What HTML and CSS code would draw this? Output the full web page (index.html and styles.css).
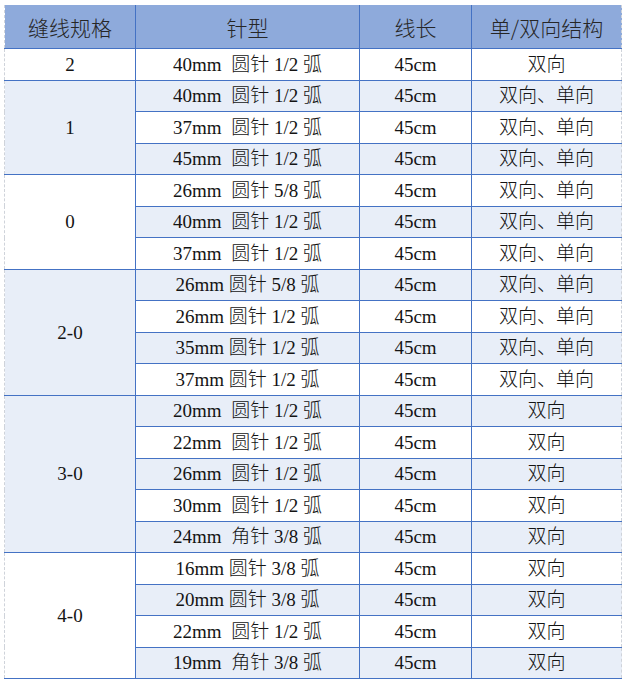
FILE: index.html
```html
<!DOCTYPE html>
<html lang="zh-CN">
<head>
<meta charset="utf-8">
<title>缝线规格</title>
<link rel="stylesheet" href="styles.css">
</head>
<body>
<table class="spec">
  <colgroup>
    <col class="c1"><col class="c2"><col class="c3"><col class="c4">
  </colgroup>
  <thead>
    <tr><th>缝线规格</th><th>针型</th><th>线长</th><th>单/双向结构</th></tr>
  </thead>
  <tbody>
    <tr class="w"><td>2</td><td class="n">40mm  圆针 1/2 弧</td><td>45cm</td><td>双向</td></tr>

    <tr class="b"><td rowspan="3" class="g">1</td><td class="n">40mm  圆针 1/2 弧</td><td>45cm</td><td>双向、单向</td></tr>
    <tr class="w"><td class="n">37mm  圆针 1/2 弧</td><td>45cm</td><td>双向、单向</td></tr>
    <tr class="b"><td class="n">45mm  圆针 1/2 弧</td><td>45cm</td><td>双向、单向</td></tr>

    <tr class="w"><td rowspan="3" class="g">0</td><td class="n">26mm  圆针 5/8 弧</td><td>45cm</td><td>双向、单向</td></tr>
    <tr class="b"><td class="n">40mm  圆针 1/2 弧</td><td>45cm</td><td>双向、单向</td></tr>
    <tr class="w"><td class="n">37mm  圆针 1/2 弧</td><td>45cm</td><td>双向、单向</td></tr>

    <tr class="b"><td rowspan="4" class="g">2-0</td><td class="n">26mm 圆针 5/8 弧</td><td>45cm</td><td>双向、单向</td></tr>
    <tr class="w"><td class="n">26mm 圆针 1/2 弧</td><td>45cm</td><td>双向、单向</td></tr>
    <tr class="b"><td class="n">35mm 圆针 1/2 弧</td><td>45cm</td><td>双向、单向</td></tr>
    <tr class="w"><td class="n">37mm 圆针 1/2 弧</td><td>45cm</td><td>双向、单向</td></tr>

    <tr class="b"><td rowspan="5" class="g">3-0</td><td class="n">20mm  圆针 1/2 弧</td><td>45cm</td><td>双向</td></tr>
    <tr class="w"><td class="n">22mm  圆针 1/2 弧</td><td>45cm</td><td>双向</td></tr>
    <tr class="b"><td class="n">26mm  圆针 1/2 弧</td><td>45cm</td><td>双向</td></tr>
    <tr class="w"><td class="n">30mm  圆针 1/2 弧</td><td>45cm</td><td>双向</td></tr>
    <tr class="b"><td class="n">24mm  角针 3/8 弧</td><td>45cm</td><td>双向</td></tr>

    <tr class="w"><td rowspan="4" class="g">4-0</td><td class="n">16mm 圆针 3/8 弧</td><td>45cm</td><td>双向</td></tr>
    <tr class="b"><td class="n">20mm 圆针 3/8 弧</td><td>45cm</td><td>双向</td></tr>
    <tr class="w"><td class="n">22mm  圆针 1/2 弧</td><td>45cm</td><td>双向</td></tr>
    <tr class="b"><td class="n">19mm  角针 3/8 弧</td><td>45cm</td><td>双向</td></tr>
  </tbody>
</table>
</body>
</html>
```
FILE: styles.css
```css
html, body {
  margin: 0;
  padding: 0;
  background: #ffffff;
}
body {
  padding: 5px 0 0 4px;
}
.spec {
  border-collapse: collapse;
  table-layout: fixed;
  width: 618px;
  font-family: "Liberation Serif", "Noto Sans CJK SC", serif;
  color: #141414;
}
.c1 { width: 131px; }
.c2 { width: 224px; }
.c3 { width: 112px; }
.c4 { width: 150px; }
.spec th {
  height: 43px;
  padding: 0;
  background: #8eaadb;
  font-weight: 300;
  font-size: 21px;
  color: #262626;
  font-family: "Noto Sans CJK SC", sans-serif;
  border-left: 1px solid #4472c4;
  border-right: 1px solid #4472c4;
  border-bottom: 1px solid #4472c4;
  border-top: none;
  text-align: center;
  vertical-align: middle;
}
.spec th:first-child { border-left: 1px dashed #cfd3da; }
.spec th:last-child { border-right: 1px dashed #cfd3da; }
.spec td {
  height: 30.5px;
  padding: 0;
  font-size: 19px;
  font-weight: 300;
  text-align: center;
  vertical-align: middle;
  border: 1px solid #4472c4;
  line-height: 1;
}
.spec td.n { white-space: pre; }
.spec tr td:first-child { border-left: 1px dashed #cfd3da; }
.spec tr td:last-child { border-right: 1px dashed #cfd3da; }
.spec tr.w td { background: #ffffff; }
.spec tr.b td { background: #e8eef8; }
.spec tbody tr:last-child td,
.spec td.g { border-bottom: 1px solid #4472c4; }
```
